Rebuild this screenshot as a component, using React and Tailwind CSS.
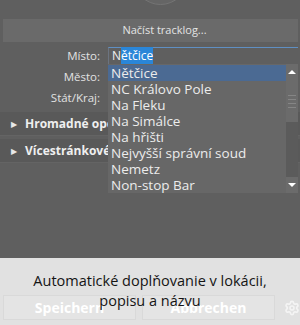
import { Settings } from "lucide-react";

const places = [
  "Nětčice",
  "NC Královo Pole",
  "Na Fleku",
  "Na Simálce",
  "Na hřišti",
  "Nejvyšší správní soud",
  "Nemetz",
  "Non-stop Bar",
];

const Row = ({ label, children }) => (
  <div className="flex h-[21px] items-center">
    <div className="w-[101px] pr-[1px] text-right text-[11.5px] text-[#e2e2e2]">{label}</div>
    <div className="ml-[7px] flex-1">{children}</div>
  </div>
);

const Section = ({ title }) => (
  <div className="flex h-[24px] items-center gap-[8px] border-b border-[#646464] bg-[#595959] pl-[11px]">
    <span className="text-[8px] leading-none text-[#e8e8e8]">▶</span>
    <span className="text-[12px] font-bold text-[#efefef]">{title}</span>
  </div>
);

export default function App() {
  return (
    <div
      className="relative h-[325px] w-[300px] overflow-hidden bg-[#5f5f5f]"
      style={{ fontFamily: '"Open Sans", "Noto Sans", sans-serif' }}
    >
      <div className="h-[19px] overflow-hidden">
        <div className="ml-[133px] -mt-[50px] h-[55px] w-[55px] rounded-full border border-[#747474] bg-[#656565]" />
      </div>

      <div className="ml-[3px] mr-[2px] flex h-[23px] items-center justify-center bg-[#6a6a6a] pl-[28px] text-[11px] text-[#e4e4e4]">
        Načíst tracklog...
      </div>

      <div className="mt-[3px] pr-[2px]">
        <Row label="Místo:">
          <div className="flex h-[18px] items-center border-l border-t border-[#5f8fc2] border-l-[#6c7480] bg-[#5f5f5f] pl-[3px] text-[12px] text-[#f0f0f0]">
            <span>N</span>
            <span className="bg-[#2a86d8] text-white">ětčice</span>
          </div>
        </Row>
        <Row label="Město:" />
        <Row label="Stát/Kraj:" />
      </div>

      <div className="mt-[4px]">
        <Section title="Hromadné operace" />
        <div className="h-[3px]" />
        <Section title="Vícestránkové úpravy" />
      </div>

      <div className="absolute left-[108px] top-[64px] flex h-[129px] w-[190px] bg-[#676767]">
        <div className="flex-1 pt-[1px]">
          {places.map((p, i) => (
            <div
              key={p}
              className={`flex h-[16px] items-center pl-[3px] text-[13.5px] text-[#ececec] ${i === 0 ? "bg-[#4b6a93]" : ""}`}
            >
              {p}
            </div>
          ))}
        </div>
        <div className="flex w-[12px] flex-col">
          <div className="flex h-[16px] items-center justify-center bg-[#6b6b6b]">
            <div className="h-0 w-0 border-x-[4px] border-b-[4px] border-x-transparent border-b-white" />
          </div>
          <div className="flex h-[42px] flex-col items-center justify-center gap-[3px] bg-[#6b6b6b]">
            <div className="h-px w-[8px] bg-[#858585]" />
            <div className="h-px w-[8px] bg-[#858585]" />
            <div className="h-px w-[8px] bg-[#858585]" />
            <div className="h-px w-[8px] bg-[#858585]" />
          </div>
          <div className="flex-1 bg-[#5b5b5b]" />
          <div className="flex h-[16px] items-center justify-center bg-[#6b6b6b]">
            <div className="h-0 w-0 border-x-[4px] border-t-[4px] border-x-transparent border-t-white" />
          </div>
        </div>
      </div>

      <div className="absolute bottom-0 left-0 right-0 h-[67px] bg-[#e1e1e1]">
        <div className="mt-[37px] flex gap-[6px] pl-[3px]">
          <div className="flex h-[25px] w-[137px] items-center justify-center border border-[#d9d9d9] bg-[#e4e4e4] text-[14px] font-bold text-white">
            Speichern
          </div>
          <div className="flex h-[25px] w-[137px] items-center justify-center border border-[#d9d9d9] bg-[#e4e4e4] text-[14px] font-bold text-white">
            Abbrechen
          </div>
          <div className="flex items-center pl-[3px]">
            <Settings size={16} color="#f4f4f4" strokeWidth={2.5} />
          </div>
        </div>
        <div className="absolute left-0 right-0 top-[13px] text-center text-[14.5px] leading-[20px] text-[#141414]">
          Automatické doplňovanie v lokácii,
          <br />
          popisu a názvu
        </div>
      </div>
    </div>
  );
}
